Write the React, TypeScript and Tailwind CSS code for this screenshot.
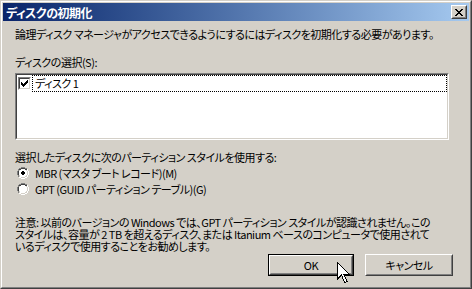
function CloseButton() {
  return (
    <div className="h-[14px] w-[16px] border border-t-white border-l-white border-r-[#404040] border-b-[#404040] bg-[#d4d0c8]">
      <div className="flex h-full w-full items-center justify-center border border-t-[#d4d0c8] border-l-[#d4d0c8] border-r-[#808080] border-b-[#808080]">
        <svg width="8" height="7" viewBox="0 0 8 7" shapeRendering="crispEdges">
          <path d="M0 0h2v1h-2zM6 0h2v1h-2zM1 1h2v1h-2zM5 1h2v1h-2zM2 2h4v1h-4zM3 3h2v1h-2zM2 4h4v1h-4zM1 5h2v1h-2zM5 5h2v1h-2zM0 6h2v1h-2zM6 6h2v1h-2z" fill="#000" />
        </svg>
      </div>
    </div>
  );
}

function Checkbox() {
  return (
    <div className="h-[13px] w-[13px] border border-t-[#808080] border-l-[#808080] border-r-white border-b-white">
      <div className="flex h-full w-full items-center justify-center border border-t-[#404040] border-l-[#404040] border-r-[#d4d0c8] border-b-[#d4d0c8] bg-white">
        <svg width="7" height="7" viewBox="0 0 7 7" shapeRendering="crispEdges">
          <path d="M6 0h1v3h-1zM5 1h1v3h-1zM4 2h1v3h-1zM3 3h1v3h-1zM2 4h1v3h-1zM1 3h1v3h-1zM0 2h1v3h-1z" fill="#000" />
        </svg>
      </div>
    </div>
  );
}

function Radio({ checked }: { checked?: boolean }) {
  return (
    <svg width="12" height="12" viewBox="0 0 12 12" shapeRendering="crispEdges">
      <path d="M4 0h4v1h-4zM2 1h2v1h-2zM8 1h2v1h-2zM1 2h1v2h-1zM0 4h1v4h-1zM1 8h1v2h-1z" fill="#808080" />
      <path d="M4 1h4v1h-4zM2 2h2v1h-2zM8 2h2v1h-2zM1 4h1v4h-1z" fill="#404040" />
      <path d="M10 2h1v2h-1zM11 4h1v4h-1zM10 8h1v2h-1zM8 10h2v1h-2zM2 10h2v1h-2zM4 11h4v1h-4z" fill="#ffffff" />
      <path d="M10 4h1v4h-1zM9 8h1v1h-1zM8 9h1v1h-1zM4 10h4v1h-4zM2 9h1v1h-1z" fill="#d4d0c8" />
      <path d="M4 2h4v1h-4zM3 3h6v1h-6zM2 4h8v4h-8zM3 8h6v1h-6zM3 9h5v1h-5z" fill="#ffffff" />
      {checked && <path d="M5 4h2v1h-2zM4 5h4v2h-4zM5 7h2v1h-2z" fill="#000" />}
    </svg>
  );
}

function Button({ label, isDefault }: { label: string; isDefault?: boolean }) {
  return (
    <div className={isDefault ? "h-[22px] border border-black" : "h-[22px]"}>
      <div className="h-full border border-t-white border-l-white border-r-[#404040] border-b-[#404040]">
        <div className="flex h-full items-center justify-center border border-t-[#d4d0c8] border-l-[#d4d0c8] border-r-[#808080] border-b-[#808080]">
          {label}
        </div>
      </div>
    </div>
  );
}

export default function App() {
  return (
    <div className="relative h-[289px] w-[472px] overflow-hidden bg-[#d4d0c8] font-['Noto_Sans_CJK_JP',sans-serif] text-[11px] leading-[13px] tracking-[-0.5px] text-black [font-feature-settings:'palt']">
      <div className="h-full border border-t-[#d4d0c8] border-l-[#d4d0c8] border-r-[#404040] border-b-[#404040]">
        <div className="flex h-full flex-col border border-t-white border-l-white border-r-[#808080] border-b-[#808080] p-px">
          <div className="flex h-[18px] items-center justify-between bg-gradient-to-r from-[#0a246a] to-[#a6caf0] pl-[3px] pr-[2px]">
            <span className="text-[12px] font-bold leading-[13px] text-white">ディスクの初期化</span>
            <CloseButton />
          </div>

          <div className="flex flex-col pl-[12px] pr-[20px]">
            <p className="mt-[7px] whitespace-nowrap">
              論理ディスク マネージャがアクセスできるようにするにはディスクを初期化する必要があります。
            </p>

            <p className="mt-[15px]">ディスクの選択(S):</p>

            <div className="mt-[4px] h-[67px] w-[434px] border border-t-[#808080] border-l-[#808080] border-r-white border-b-white">
              <div className="h-full border border-t-[#404040] border-l-[#404040] border-r-[#d4d0c8] border-b-[#d4d0c8] bg-white">
                <div className="flex h-[17px] items-center">
                  <div className="ml-px">
                    <Checkbox />
                  </div>
                  <div className="ml-px flex h-[17px] w-[416px] items-center border border-dotted border-black pl-[2px]">
                    ディスク 1
                  </div>
                </div>
              </div>
            </div>

            <p className="mt-[11px]">選択したディスクに次のパーティション スタイルを使用する:</p>

            <div className="mt-[2px] flex flex-col gap-[2px] pl-[2px]">
              <label className="flex h-[14px] items-center gap-[6px]">
                <Radio checked />
                <span>MBR (マスタ ブート レコード)(M)</span>
              </label>
              <label className="flex h-[14px] items-center gap-[6px]">
                <Radio />
                <span>GPT (GUID パーティション テーブル)(G)</span>
              </label>
            </div>

            <p className="mt-[20px] whitespace-nowrap leading-[12px]">
              注意: 以前のバージョンの Windows では、GPT パーティション スタイルが認識されません。この
              <br />
              スタイルは、容量が 2 TB を超えるディスク、または Itanium ベースのコンピュータで使用されて
              <br />
              いるディスクで使用することをお勧めします。
            </p>

            <div className="mt-[2px] flex justify-end gap-[11px]">
              <div className="w-[86px]">
                <Button label="OK" isDefault />
              </div>
              <div className="mr-[-4px] w-[88px]">
                <Button label="キャンセル" />
              </div>
            </div>
          </div>
        </div>
      </div>

      <svg className="absolute left-[337px] top-[262px]" width="14" height="22" viewBox="0 0 14 22" shapeRendering="crispEdges">
        <path d="M0.5 0.5 L0.5 17 L4.5 13 L7.5 20.5 L10 19.5 L7 12.5 L12.5 12.5 Z" fill="#fff" stroke="#000" strokeWidth="1" />
      </svg>
    </div>
  );
}
